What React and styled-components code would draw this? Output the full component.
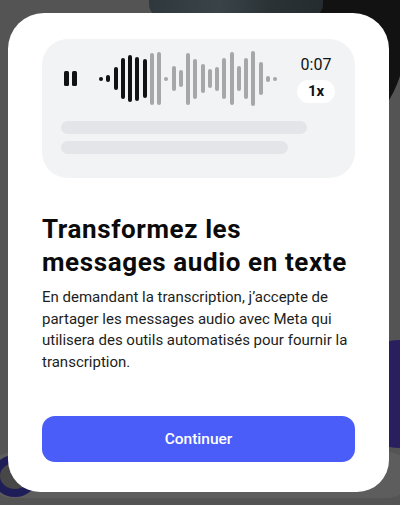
import React from "react";
import styled, { createGlobalStyle } from "styled-components";

const GlobalStyle = createGlobalStyle`
  html, body {
    margin: 0;
    padding: 0;
    background: #545454;
    overflow: hidden;
  }
  body {
    font-family: Roboto, "Noto Sans", "Liberation Sans", sans-serif;
    -webkit-font-smoothing: antialiased;
  }
  * { box-sizing: border-box; }
`;

const Screen = styled.div`
  position: relative;
  width: 400px;
  height: 505px;
  overflow: hidden;
  padding: 13px 0 0 8px;
  background: #545454;
`;

const Photo = styled.div`
  position: absolute;
  left: 149px;
  top: -30px;
  width: 174px;
  height: 48px;
  border-radius: 14px;
  background: linear-gradient(90deg, #2f383c 0%, #3a4448 40%, #2a3236 70%, #252c30 100%);
  z-index: 1;
`;

const DarkDisc = styled.div`
  position: absolute;
  left: 258px;
  top: -62px;
  width: 148px;
  height: 198px;
  border-radius: 50%;
  background: #121212;
  z-index: 0;
`;

const VioletDisc = styled.div`
  position: absolute;
  left: 346px;
  top: 340px;
  width: 108px;
  height: 108px;
  border-radius: 50%;
  background: #291f5f;
  z-index: 0;
`;

const BottomBand = styled.div`
  position: absolute;
  left: -10px;
  right: -10px;
  top: 452px;
  height: 46px;
  border-radius: 22px;
  background: #5d5d5d;
  z-index: 0;
`;

const NavyRing = styled.div`
  position: absolute;
  left: -8px;
  top: 455px;
  width: 46px;
  height: 42px;
  border-radius: 50%;
  border: 8px solid #1e1d58;
  background: #474747;
  z-index: 0;
`;

const Card = styled.div`
  position: relative;
  z-index: 2;
  width: 381px;
  height: 479px;
  background: #ffffff;
  border-radius: 36px 36px 32px 32px;
  padding: 26px 34px 30px 34px;
  display: flex;
  flex-direction: column;
`;

const Panel = styled.div`
  background: #f2f3f5;
  border-radius: 26px;
  padding: 11px 20px 24px 19px;
  height: 139px;
  display: flex;
  flex-direction: column;
`;

const PlayerRow = styled.div`
  display: flex;
  align-items: center;
  height: 57px;
`;

const Pause = styled.div`
  display: flex;
  gap: 2.7px;
  margin-left: 3px;
`;

const PauseBar = styled.span`
  display: block;
  width: 5px;
  height: 15.5px;
  border-radius: 1.5px;
  background: #111214;
`;

const Wave = styled.div`
  display: flex;
  align-items: center;
  gap: 3.25px;
  margin-left: 22.4px;
`;

const Bar = styled.span`
  display: block;
  width: 4px;
  height: ${(p) => p.$h}px;
  border-radius: 2px;
  background: ${(p) => (p.$played ? "#111214" : "#a6a7a9")};
`;

const Side = styled.div`
  margin-left: auto;
  display: flex;
  flex-direction: column;
  align-items: center;
`;

const Time = styled.div`
  font-size: 16px;
  line-height: 19px;
  color: #111214;
`;

const Speed = styled.div`
  margin-top: 6px;
  width: 38px;
  height: 23px;
  border-radius: 12px;
  background: #ffffff;
  display: flex;
  align-items: center;
  justify-content: center;
  font-size: 15px;
  font-weight: 700;
  color: #111214;
`;

const Lines = styled.div`
  margin-top: 14px;
  display: flex;
  flex-direction: column;
  gap: 7px;
`;

const SkelLine = styled.span`
  display: block;
  width: ${(p) => p.$w}px;
  height: 13px;
  border-radius: 7px;
  background: #e4e5e8;
`;

const Title = styled.h1`
  margin: 35px 0 0 0;
  font-size: 26px;
  line-height: 33px;
  letter-spacing: 0.6px;
  font-weight: 700;
  color: #0b0b0c;
`;

const Body = styled.p`
  margin: 8px 0 0 0;
  font-size: 15px;
  line-height: 21.5px;
  color: #1c1e21;
`;

const Button = styled.button`
  margin-top: auto;
  height: 46px;
  width: 100%;
  border: none;
  border-radius: 13px;
  background: #4a5df8;
  color: #ffffff;
  font-family: inherit;
  font-size: 15.5px;
  font-weight: 500;
  cursor: pointer;
`;

const heights = [4, 7, 23, 41, 47, 44, 39, 52, 53, 4, 25, 17, 52, 40, 29, 19, 24, 41, 53, 25, 41, 55, 33, 6, 4];

export default function App() {
  return (
    <>
      <GlobalStyle />
      <Screen>
        <DarkDisc />
        <Photo />
        <VioletDisc />
        <BottomBand />
        <NavyRing />
        <Card>
          <Panel>
            <PlayerRow>
              <Pause>
                <PauseBar />
                <PauseBar />
              </Pause>
              <Wave>
                {heights.map((h, i) => (
                  <Bar key={i} $h={h} $played={i < 7} />
                ))}
              </Wave>
              <Side>
                <Time>0:07</Time>
                <Speed>1x</Speed>
              </Side>
            </PlayerRow>
            <Lines>
              <SkelLine $w={246} />
              <SkelLine $w={227} />
            </Lines>
          </Panel>
          <Title>
            Transformez les
            <br />
            messages audio en texte
          </Title>
          <Body>
            En demandant la transcription, j’accepte de partager les messages
            audio avec Meta qui utilisera des outils automatisés pour fournir la
            transcription.
          </Body>
          <Button>Continuer</Button>
        </Card>
      </Screen>
    </>
  );
}
